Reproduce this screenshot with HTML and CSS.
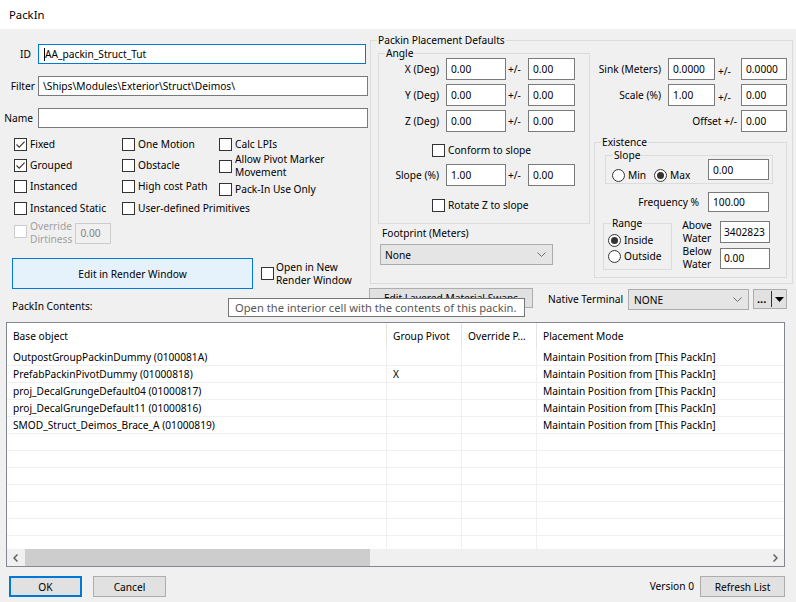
FILE: index.html
```html
<!DOCTYPE html>
<html>
<head>
<meta charset="utf-8">
<title>PackIn</title>
<link rel="stylesheet" href="styles.css">
</head>
<body>
<div class="win">
  <div class="titlebar">PackIn</div>
  <div class="client">
    <div class="upper">
      <div class="leftcol">
        <div class="field f-id"><span class="flabel">ID</span><div class="tb tb-focus tb-id"><span class="caret"></span>AA_packin_Struct_Tut</div></div>
        <div class="field f-filter"><span class="flabel">Filter</span><div class="tb tb-wide">\Ships\Modules\Exterior\Struct\Deimos\</div></div>
        <div class="field f-name"><span class="flabel">Name</span><div class="tb tb-wide"></div></div>
        <div class="checks">
          <div class="chk"><span class="box"><svg viewBox="0 0 11 11" width="11" height="11"><path d="M1.5 5.5 L4.2 8.2 L9.6 2.6" fill="none" stroke="#333" stroke-width="1.1"/></svg></span><span>Fixed</span></div>
          <div class="chk"><span class="box"></span><span>One Motion</span></div>
          <div class="chk"><span class="box"></span><span>Calc LPIs</span></div>
          <div class="chk"><span class="box"><svg viewBox="0 0 11 11" width="11" height="11"><path d="M1.5 5.5 L4.2 8.2 L9.6 2.6" fill="none" stroke="#333" stroke-width="1.1"/></svg></span><span>Grouped</span></div>
          <div class="chk"><span class="box"></span><span>Obstacle</span></div>
          <div class="chk chk-two"><span class="box"></span><span>Allow Pivot Marker<br>Movement</span></div>
          <div class="chk"><span class="box"></span><span>Instanced</span></div>
          <div class="chk"><span class="box"></span><span>High cost Path</span></div>
          <div class="chk chk-low"><span class="box"></span><span>Pack-In Use Only</span></div>
          <div class="chk"><span class="box"></span><span>Instanced Static</span></div>
          <div class="chk chk-span"><span class="box"></span><span>User-defined Primitives</span></div>
          <div class="chk chk-dis"><span class="box"></span><span class="twoline">Override<br>Dirtiness</span><div class="tb tb-dis">0.00</div></div>
        </div>
        <div class="editrow">
          <div class="btn btn-edit">Edit in Render Window</div>
          <div class="chk chk-open"><span class="box"></span><span class="twoline">Open in New<br>Render Window</span></div>
        </div>
      </div>

      <div class="grp placement">
        <div class="legend lg-outer">Packin Placement Defaults</div>
        <div class="pl-body">
          <div class="pl-left">
            <div class="grp angle">
              <div class="legend lg-angle">Angle</div>
              <div class="arow"><span class="alabel">X (Deg)</span><div class="tb tb-a1">0.00</div><span class="pm">+/-</span><div class="tb tb-a2">0.00</div></div>
              <div class="arow"><span class="alabel">Y (Deg)</span><div class="tb tb-a1">0.00</div><span class="pm">+/-</span><div class="tb tb-a2">0.00</div></div>
              <div class="arow"><span class="alabel">Z (Deg)</span><div class="tb tb-a1">0.00</div><span class="pm">+/-</span><div class="tb tb-a2">0.00</div></div>
              <div class="chk chk-conform"><span class="box"></span><span>Conform to slope</span></div>
              <div class="arow arow-slope"><span class="alabel">Slope (%)</span><div class="tb tb-a1">1.00</div><span class="pm">+/-</span><div class="tb tb-a2">0.00</div></div>
              <div class="chk chk-rotate"><span class="box"></span><span>Rotate Z to slope</span></div>
            </div>
            <div class="fp-label">Footprint (Meters)</div>
            <div class="combo combo-fp"><span>None</span><svg class="chev" viewBox="0 0 9 5" width="9" height="5"><path d="M0.5 0.5 L4.5 4.5 L8.5 0.5" fill="none" stroke="#6d6d6d" stroke-width="1"/></svg></div>
          </div>
          <div class="pl-right">
            <div class="arow"><span class="rlabel">Sink (Meters)</span><div class="tb tb-r">0.0000</div><span class="pm pm-r">+/-</span><div class="tb tb-r2">0.0000</div></div>
            <div class="arow"><span class="rlabel">Scale (%)</span><div class="tb tb-r">1.00</div><span class="pm pm-r">+/-</span><div class="tb tb-r2">0.00</div></div>
            <div class="arow"><span class="olabel">Offset +/-</span><div class="tb tb-r2">0.00</div></div>
            <div class="grp exist">
              <div class="legend lg-exist">Existence</div>
              <div class="grp slope">
                <div class="legend lg-slope">Slope</div>
                <div class="slope-row">
                  <div class="rad rad-min"><span class="circle"></span><span>Min</span></div>
                  <div class="rad"><span class="circle on"></span><span>Max</span></div>
                  <div class="tb tb-slope">0.00</div>
                </div>
              </div>
              <div class="freq-row"><span class="freq-label">Frequency %</span><div class="tb tb-freq">100.00</div></div>
              <div class="range-row">
                <div class="grp range">
                  <div class="legend lg-range">Range</div>
                  <div class="rad rad-r"><span class="circle on"></span><span>Inside</span></div>
                  <div class="rad rad-r"><span class="circle"></span><span>Outside</span></div>
                </div>
                <div class="water">
                  <span class="wlabel">Above<br>Water</span><div class="tb tb-water">3402823</div>
                  <span class="wlabel">Below<br>Water</span><div class="tb tb-water tb-water2">0.00</div>
                </div>
              </div>
            </div>
          </div>
        </div>
      </div>
    </div>

    <div class="toolrow">
      <div class="contents-label">PackIn Contents:</div>
      <div class="btn btn-material">Edit Layered Material Swaps</div>
      <div class="nt-label">Native Terminal</div>
      <div class="combo combo-nt"><span>NONE</span><svg class="chev" viewBox="0 0 9 5" width="9" height="5"><path d="M0.5 0.5 L4.5 4.5 L8.5 0.5" fill="none" stroke="#6d6d6d" stroke-width="1"/></svg></div>
      <div class="btn btn-split"><span class="dots">...</span><span class="sep"></span><svg viewBox="0 0 9 5" width="9" height="5"><path d="M0 0 H9 L4.5 5 Z" fill="#000"/></svg></div>
      <div class="tooltip">Open the interior cell with the contents of this packin.</div>
    </div>

    <div class="listview">
      <div class="lv-head">
        <div class="hc">Base object</div>
        <div class="hc">Group Pivot</div>
        <div class="hc">Override P...</div>
        <div class="hc hc-last">Placement Mode</div>
      </div>
      <div class="lv-body">
        <div class="lv-row"><div class="c">OutpostGroupPackinDummy (0100081A)</div><div class="c"></div><div class="c"></div><div class="c c-last">Maintain Position from [This PackIn]</div></div>
        <div class="lv-row"><div class="c">PrefabPackinPivotDummy (01000818)</div><div class="c">X</div><div class="c"></div><div class="c c-last">Maintain Position from [This PackIn]</div></div>
        <div class="lv-row"><div class="c">proj_DecalGrungeDefault04 (01000817)</div><div class="c"></div><div class="c"></div><div class="c c-last">Maintain Position from [This PackIn]</div></div>
        <div class="lv-row"><div class="c">proj_DecalGrungeDefault11 (01000816)</div><div class="c"></div><div class="c"></div><div class="c c-last">Maintain Position from [This PackIn]</div></div>
        <div class="lv-row"><div class="c">SMOD_Struct_Deimos_Brace_A (01000819)</div><div class="c"></div><div class="c"></div><div class="c c-last">Maintain Position from [This PackIn]</div></div>
        <div class="lv-row"><div class="c"></div><div class="c"></div><div class="c"></div><div class="c c-last"></div></div>
        <div class="lv-row"><div class="c"></div><div class="c"></div><div class="c"></div><div class="c c-last"></div></div>
        <div class="lv-row"><div class="c"></div><div class="c"></div><div class="c"></div><div class="c c-last"></div></div>
        <div class="lv-row"><div class="c"></div><div class="c"></div><div class="c"></div><div class="c c-last"></div></div>
        <div class="lv-row"><div class="c"></div><div class="c"></div><div class="c"></div><div class="c c-last"></div></div>
        <div class="lv-row"><div class="c"></div><div class="c"></div><div class="c"></div><div class="c c-last"></div></div>
        <div class="lv-row"><div class="c"></div><div class="c"></div><div class="c"></div><div class="c c-last"></div></div>
      </div>
      <div class="hscroll">
        <div class="sb-btn"><svg viewBox="0 0 5 8" width="5" height="8"><path d="M4.5 0.5 L1 4 L4.5 7.5" fill="none" stroke="#606060" stroke-width="1.5"/></svg></div>
        <div class="sb-track"><div class="sb-thumb"></div></div>
        <div class="sb-btn"><svg viewBox="0 0 5 8" width="5" height="8"><path d="M0.5 0.5 L4 4 L0.5 7.5" fill="none" stroke="#606060" stroke-width="1.5"/></svg></div>
      </div>
    </div>

    <div class="footer">
      <div class="btn btn-ok">OK</div>
      <div class="btn btn-cancel">Cancel</div>
      <div class="version">Version 0</div>
      <div class="btn btn-refresh">Refresh List</div>
    </div>
  </div>
</div>
</body>
</html>
```

FILE: styles.css
```css
* { box-sizing: border-box; }
html, body { margin: 0; padding: 0; }
body {
  font-family: "Noto Sans", "Open Sans", sans-serif;
  font-size: 10.2px;
  color: #000;
  background: #f0f0f0;
}
.win { width: 796px; height: 602px; overflow: hidden; display: flex; flex-direction: column; }
.titlebar {
  height: 29px; line-height: 29px; background: #fff; padding-left: 9px; font-size: 11.3px;
}
.client { flex: 1; background: #f0f0f0; display: flex; flex-direction: column; }

/* generic controls */
.tb {
  background: #fff; border: 1px solid #7a7a7a; padding-left: 4px;
  display: flex; align-items: center; white-space: nowrap; overflow: hidden;
}
.tb-focus { border-color: #0078d7; }
.tb-dis { background: #f0f0f0; border-color: #cccccc; color: #838383; }
.btn {
  background: #e1e1e1; border: 1px solid #adadad;
  display: flex; align-items: center; justify-content: center; white-space: nowrap;
}
.box {
  width: 13px; height: 13px; flex: none; background: #fff; border: 1px solid #333;
  display: flex; align-items: center; justify-content: center;
}
.box svg { display: block; }
.chk { display: flex; align-items: flex-start; line-height: 13px; white-space: nowrap; }
.chk .box { margin-right: 3px; }
.circle {
  width: 13px; height: 13px; flex: none; border: 1px solid #333; border-radius: 50%;
  background: #fff; display: flex; align-items: center; justify-content: center; margin-right: 3px;
}
.circle.on::after { content: ""; width: 7px; height: 7px; border-radius: 50%; background: #333; }
.rad { display: flex; align-items: center; line-height: 13px; white-space: nowrap; }
.combo {
  background: #e5e5e5; border: 1px solid #acacac; display: flex; align-items: center;
  justify-content: space-between; padding: 0 6px 0 4px;
}
.chev { display: block; }
.grp { border: 1px solid #dcdcdc; }
.legend {
  height: 13px; line-height: 13px; margin: -7px 0 -6px 6px; padding: 0 1px;
  background: #f0f0f0; width: max-content;
}
.lg-outer { margin-left: -1px; margin-bottom: 6px; }
.lg-angle { margin-bottom: -2px; }
.lg-exist { margin-left: -4px; margin-bottom: 6px; }
.lg-slope { margin-left: 1px; margin-bottom: -6px; }
.lg-range { margin-left: 3px; margin-bottom: 2px; }

/* upper area */
.upper { height: 260px; display: flex; }
.leftcol { width: 370px; padding-top: 15px; }
.field { display: flex; height: 20px; margin-bottom: 12px; align-items: center; }
.flabel { width: 38px; text-align: right; }
.f-id .flabel { padding-right: 7px; }
.f-filter .flabel { padding-right: 3px; }
.f-name .flabel { padding-right: 5px; }
.tb-id { width: 328px; height: 20px; padding-left: 5px; }
.tb-wide { width: 330px; height: 20px; }
.caret { width: 1px; height: 13px; background: #000; }
.checks {
  display: grid; grid-template-columns: 108px 97px 1fr;
  grid-template-rows: 21px 21px 22px 20px 22px;
  margin-top: -2px; padding-left: 14px;
}
.chk-two { align-items: center; margin-top: -6px; height: 26px; }
.chk-low { margin-top: 3px; }
.chk-span { grid-column: 2 / 4; }
.chk-dis { grid-column: 1 / 4; align-items: center; color: #a0a0a0; }
.chk-dis .box { border-color: #cccccc; margin-top: -4px; }
.twoline { line-height: 13px; }
.tb-dis { width: 36px; height: 21px; margin-left: 3px; }
.editrow { display: flex; align-items: center; margin-top: 14px; height: 31px; }
.btn-edit {
  margin-left: 12px; width: 241px; height: 31px; background: #e5f1fb; border-color: #0078d7;
}
.chk-open { margin-left: 8px; align-items: center; }
.chk-open .box { margin-right: 2px; }

/* placement group */
.placement { margin-top: 11px; width: 423px; height: 244px; padding-left: 7px; }
.pl-body { display: flex; }
.pl-left { width: 212px; }
.angle { width: 212px; height: 171px; }
.arow { display: flex; align-items: center; height: 22px; margin-bottom: 4px; }
.alabel { width: 60px; text-align: right; margin-right: 7px; white-space: nowrap; }
.tb-a1 { width: 60px; height: 22px; }
.tb-a2 { width: 47px; height: 22px; }
.pm { width: 22px; padding-left: 2px; white-space: nowrap; }
.chk-conform { margin-top: 12px; padding-left: 53px; }
.arow-slope { margin-top: 7px; }
.chk-rotate { margin-top: 13px; padding-left: 53px; }
.fp-label { margin: 3px 0 0 4px; line-height: 13px; }
.combo-fp { margin: 4px 0 0 2px; width: 173px; height: 21px; }

.pl-right { margin-left: 4px; padding-top: 5px; width: 198px; }
.rlabel { width: 67px; text-align: right; margin-right: 7px; white-space: nowrap; }
.tb-r { width: 47px; height: 22px; }
.pm-r { width: 26px; padding-left: 3px; padding-top: 3px; }
.tb-r2 { width: 46px; height: 22px; }
.olabel { width: 143px; text-align: right; margin-right: 4px; white-space: nowrap; }

.exist { margin-top: 10px; width: 193px; height: 136px; padding-left: 10px; }
.slope { width: 168px; height: 29px; padding-left: 6px; }
.slope-row { display: flex; align-items: flex-start; margin-top: 3px; }
.rad-min { width: 42px; }
.slope-row .rad { margin-top: 10px; }
.tb-slope { margin: 0 3px 0 auto; width: 61px; height: 21px; }
.freq-row { display: flex; align-items: center; margin-top: 8px; margin-left: -10px; }
.freq-label { width: 104px; text-align: right; margin-right: 9px; white-space: nowrap; }
.tb-freq { width: 61px; height: 20px; }
.range-row { display: flex; margin-top: 7px; margin-left: -2px; }
.range { margin-top: 4px; width: 69px; height: 47px; padding-left: 4px; }
.rad-r { height: 16px; }
.water {
  display: grid; grid-template-columns: 30px 50px; grid-template-rows: 26px 26px;
  column-gap: 8px; margin-left: 10px; align-items: center;
}
.wlabel { text-align: center; line-height: 13px; }
.tb-water { width: 50px; height: 22px; padding-left: 3px; }
.tb-water2 { height: 21px; }

/* tool row */
.toolrow { position: relative; height: 33px; display: flex; align-items: flex-start; }
.contents-label { width: 369px; padding-left: 12px; margin-top: 10px; line-height: 14px; }
.btn-material { width: 164px; height: 20px; margin-top: -1px; }
.nt-label { width: 80px; margin-left: 15px; margin-top: 3px; line-height: 14px; white-space: nowrap; }
.combo-nt { width: 121px; height: 21px; padding-left: 5px; }
.btn-split { margin-left: 4px; width: 34px; height: 20px; justify-content: flex-start; padding-left: 3px; }
.dots { font-weight: bold; font-size: 11px; line-height: 10px; margin-top: 0; }
.sep { width: 1px; height: 16px; background: #333; margin: 0 3px 0 5px; }
.tooltip {
  position: absolute; left: 228px; top: 9px; width: 297px; height: 19px;
  background: #fff; border: 1px solid #767676; color: #575757;
  padding-left: 6px; line-height: 17px; white-space: nowrap; font-size: 11.2px;
}

/* list view */
.listview {
  margin-left: 6px; width: 779px; height: 245px; border: 1px solid #828790;
  background: #fff; display: flex; flex-direction: column; overflow: hidden;
}
.lv-head { display: grid; grid-template-columns: 380px 75px 75px 1fr; height: 26px; flex: none; }
.hc { padding-left: 6px; line-height: 26px; border-right: 1px solid #e5e5e5; white-space: nowrap; }
.hc-last { border-right: none; }
.lv-body { flex: 1; overflow: hidden; }
.lv-row { display: grid; grid-template-columns: 380px 75px 75px 1fr; height: 17px; border-bottom: 1px solid #f0f0f0; }
.c { padding-left: 6px; line-height: 16px; border-right: 1px solid #f0f0f0; white-space: nowrap; overflow: hidden; }
.c-last { border-right: none; }
.hscroll { height: 17px; flex: none; display: flex; background: #f0f0f0; }
.sb-btn { width: 17px; display: flex; align-items: center; justify-content: center; }
.sb-track { flex: 1; display: flex; align-items: stretch; padding: 0 1px; }
.sb-thumb { width: 345px; background: #cdcdcd; }

/* footer */
.footer { flex: 1; display: flex; align-items: flex-start; padding-top: 9px; }
.btn-ok { margin-left: 9px; width: 73px; height: 21px; border: 2px solid #0078d7; }
.btn-cancel { margin-left: 11px; width: 73px; height: 21px; }
.version { margin-left: auto; line-height: 21px; }
.btn-refresh { margin-left: 6px; margin-right: 11px; width: 85px; height: 21px; }
```
